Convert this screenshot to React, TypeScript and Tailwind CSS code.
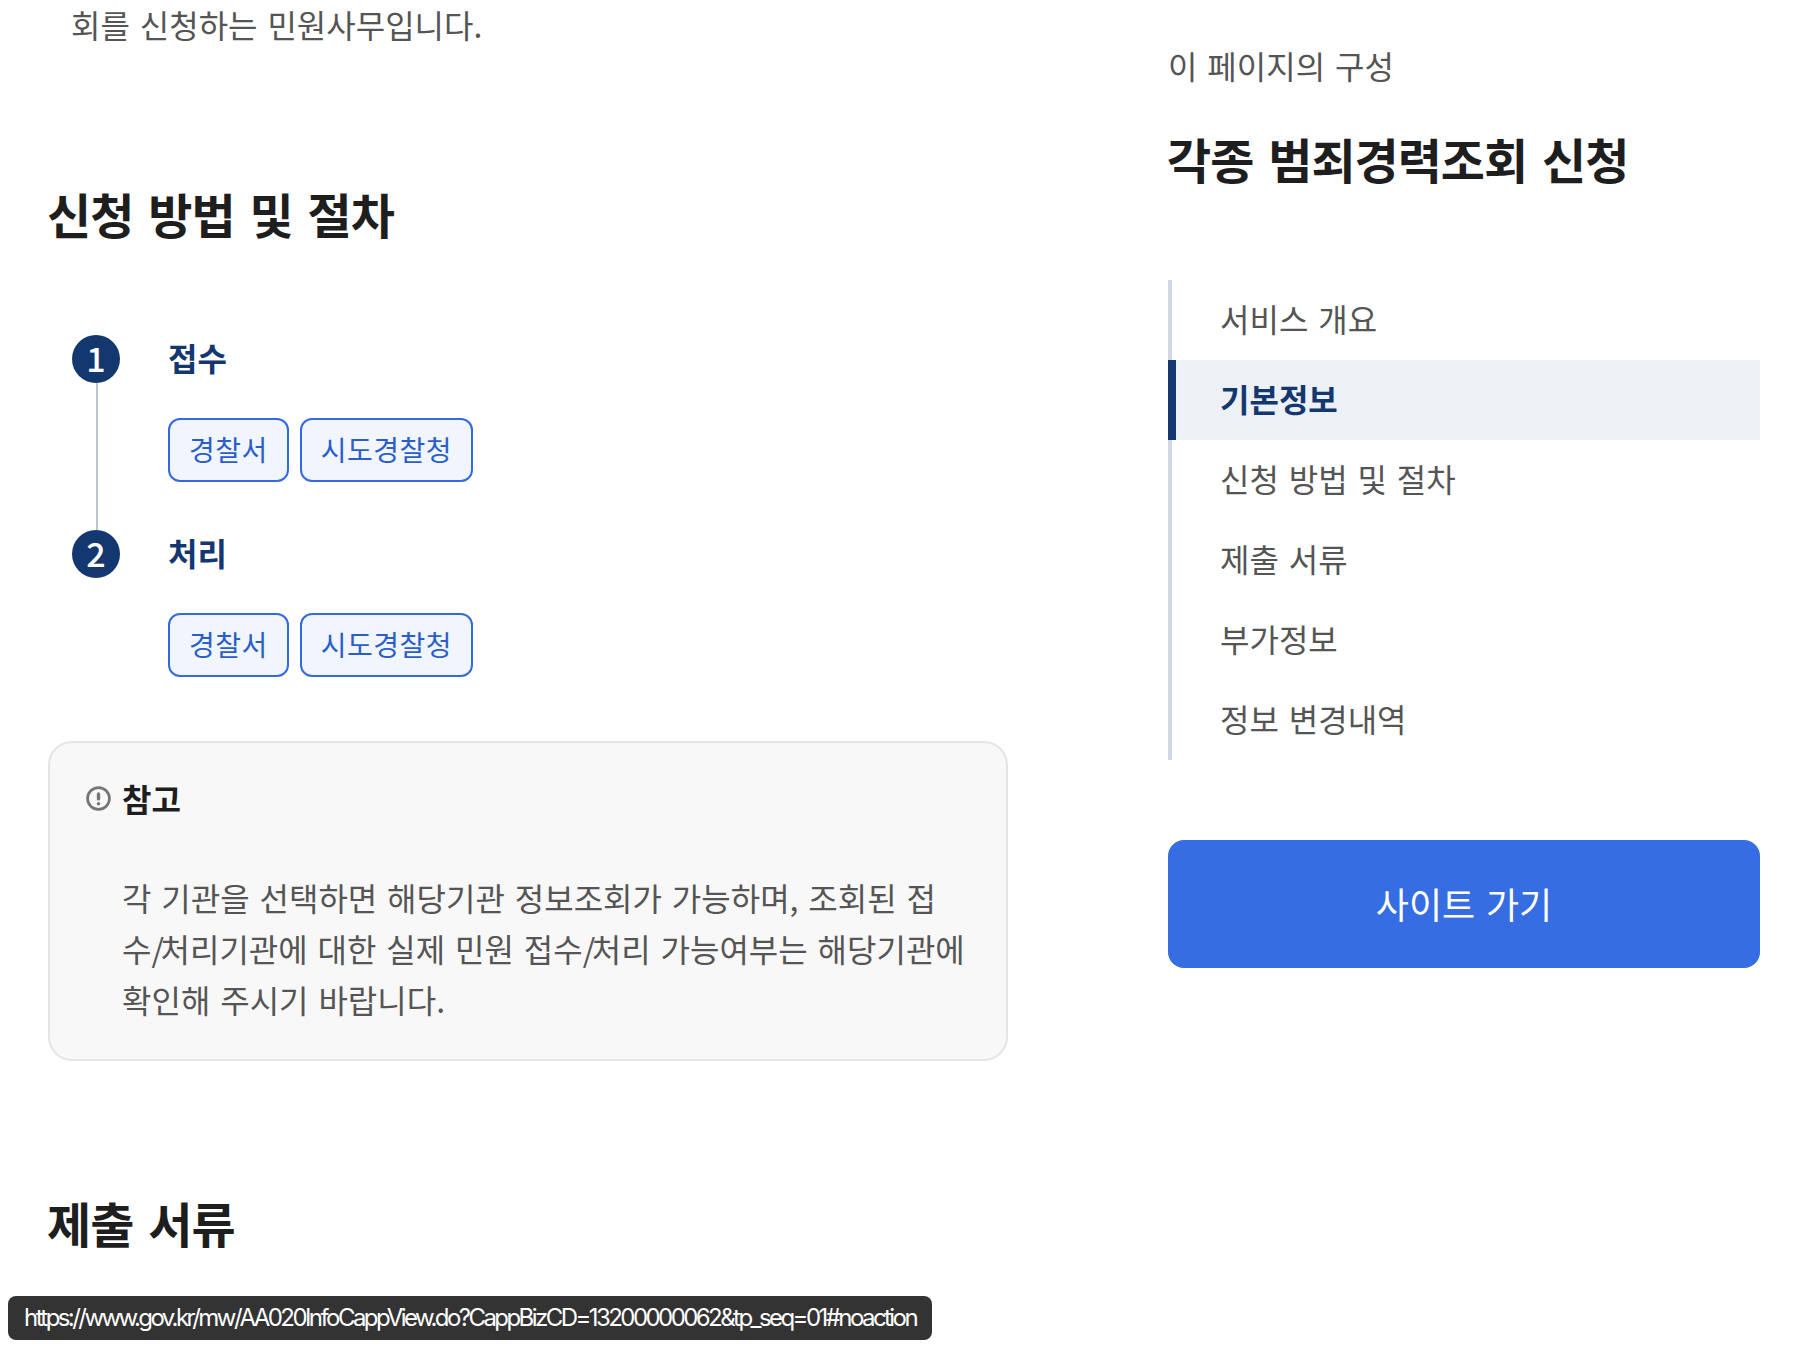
const font = "font-['Noto_Sans_CJK_KR','Noto_Sans',sans-serif]";

function Chip({ label }: { label: string }) {
  return (
    <span className="flex h-16 items-center rounded-xl border-2 border-[#3469e0] bg-[#f0f5fe] px-[19px] pb-0.5 text-[28px] tracking-[0.5px] text-[#2b5ec9]">
      {label}
    </span>
  );
}

function Step({ n, label, line }: { n: number; label: string; line?: boolean }) {
  return (
    <div className="flex gap-12">
      <div className="flex w-12 flex-col items-center">
        <span className="flex h-12 w-12 items-center justify-center rounded-full bg-[#13376f] pb-1 text-[34px] font-medium text-white">
          {n}
        </span>
        {line ? <span className="ml-0.5 w-0.5 flex-1 bg-[#b9c6da]" /> : null}
      </div>
      <div className="flex flex-col">
        <span className="-mt-0.5 text-[32px] font-bold leading-[48px] text-[#13376f]">{label}</span>
        <div className="mt-[37px] flex gap-[11px] pb-12">
          <Chip label="경찰서" />
          <Chip label="시도경찰청" />
        </div>
      </div>
    </div>
  );
}

function Slash() {
  return <span className="tracking-[-3.5px]">/</span>;
}

const nav = ["서비스 개요", "기본정보", "신청 방법 및 절차", "제출 서류", "부가정보", "정보 변경내역"];
const h2 = "-ml-px text-[48px] font-bold leading-[72px] tracking-[-1px] [word-spacing:5px] text-[#1e1e1e]";

export default function App() {
  return (
    <div className={`${font} relative flex h-[1348px] w-[1808px] overflow-hidden bg-white [word-spacing:2.7px]`}>
      <main className="ml-12 w-[960px] shrink-0">
        <p className="-mt-px pl-[23px] text-[32px] leading-[51px] text-[#555]">회를 신청하는 민원사무입니다.</p>
        <h2 className={`mt-[127px] ${h2}`}>신청 방법 및 절차</h2>
        <div className="mt-[86px] pl-6">
          <Step n={1} label="접수" line />
          <Step n={2} label="처리" />
        </div>
        <section className="mt-4 rounded-3xl border-2 border-[#e5e5e5] bg-[#f8f8f8] pb-[34px] pl-9 pr-4 pt-[31px]">
          <div className="flex items-center gap-[11px]">
            <svg viewBox="0 0 24 24" className="h-[25px] w-[25px]" fill="none">
              <circle cx="12" cy="12" r="10.5" stroke="#757575" strokeWidth="2.6" />
              <rect x="10.4" y="6" width="3.2" height="8" rx="1.6" fill="#757575" />
              <circle cx="12" cy="17" r="1.7" fill="#757575" />
            </svg>
            <strong className="text-[32px] font-bold leading-[48px] text-[#1e1e1e]">참고</strong>
          </div>
          <p className="mt-[50px] whitespace-nowrap pl-9 text-[32px] leading-[51px] text-[#555]">
            각 기관을 선택하면 해당기관 정보조회가 가능하며, 조회된 접<br />
            수<Slash />처리기관에 대한 실제 민원 접수<Slash />처리 가능여부는 해당기관에<br />
            확인해 주시기 바랍니다.
          </p>
        </section>
        <h2 className={`mt-[125px] ${h2}`}>제출 서류</h2>
      </main>
      <aside className="ml-[160px] mt-[41px] w-[592px] shrink-0">
        <p className="text-[32px] leading-[48px] text-[#555]">이 페이지의 구성</p>
        <h2 className={`mt-[33px] ${h2}`}>각종 범죄경력조회 신청</h2>
        <ul className="mt-[86px] border-l-4 border-[#cfd8e5]">
          {nav.map((item) => (
            <li
              key={item}
              className={
                item === "기본정보"
                  ? "-ml-1 flex h-20 items-center border-l-8 border-[#13376f] bg-[#edf0f5] pb-1 pl-[44px] text-[32px] font-bold text-[#13376f]"
                  : "flex h-20 items-center pb-1 pl-12 text-[32px] text-[#555]"
              }
            >
              {item}
            </li>
          ))}
        </ul>
        <a className="mt-20 flex h-32 items-center justify-center rounded-2xl bg-[#366de3] pb-0.5 text-[36px] text-white">
          사이트 가기
        </a>
      </aside>
      <div className="absolute bottom-2 left-2 flex h-11 w-[924px] items-center whitespace-nowrap rounded-lg bg-[#333] px-4 font-['Inter',sans-serif] text-2xl tracking-[-2.56px] text-white">
        https://www.gov.kr/mw/AA020InfoCappView.do?CappBizCD=13200000062&tp_seq=01#noaction
      </div>
    </div>
  );
}
